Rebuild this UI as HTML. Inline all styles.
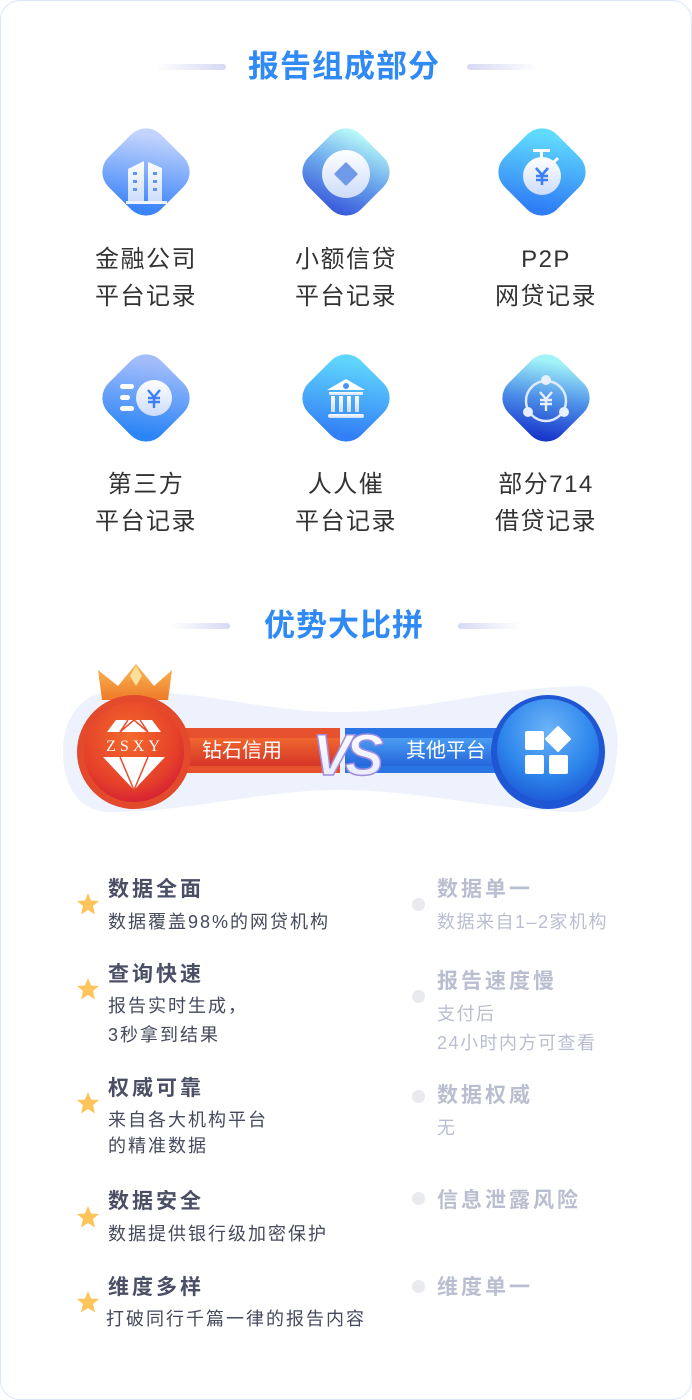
<!DOCTYPE html>
<html><head><meta charset="utf-8"><style>
*{margin:0;padding:0;box-sizing:border-box}
body{width:692px;height:1400px;background:#fff;position:relative;overflow:hidden;font-family:"Liberation Sans","Noto Sans CJK SC",sans-serif}
.card{position:absolute;left:0;top:0;width:692px;height:1400px;border:1px solid #dbe6fb;border-radius:20px}
.abs{position:absolute}
.title{position:absolute;color:#2f8af5;font-size:31px;font-weight:bold;letter-spacing:1px;line-height:40px;white-space:nowrap}
.ln{position:absolute;height:6px;border-radius:3px}
.lbl{position:absolute;width:200px;text-align:center;font-size:24px;color:#333;line-height:37px;letter-spacing:1.5px}
.ic{position:absolute;width:88px;height:88px}
.st{position:absolute;width:24px;height:24px}
.t{position:absolute;font-size:21px;font-weight:bold;color:#4a4f66;line-height:28px;white-space:nowrap;letter-spacing:3px}
.s{position:absolute;font-size:18px;color:#454a5c;line-height:28px;white-space:nowrap;letter-spacing:2px}
.rt{position:absolute;font-size:21px;color:#b9bed0;line-height:28px;white-space:nowrap;font-weight:bold;letter-spacing:3px}
.rs{position:absolute;font-size:18px;color:#b9bed0;line-height:29px;white-space:nowrap;letter-spacing:1.5px}
.dot{position:absolute;width:13px;height:13px;border-radius:50%;background:#e9eaee}
</style></head><body>
<div class="card"></div>

<div class="ln" style="left:155px;top:64px;width:71px;background:linear-gradient(90deg,rgba(220,222,245,0),#d6d9f3)"></div>
<div class="title" style="left:248px;top:47px">报告组成部分</div>
<div class="ln" style="left:467px;top:64px;width:72px;background:linear-gradient(90deg,#d6d9f3,rgba(220,222,245,0))"></div>

<svg width="0" height="0" style="position:absolute"><defs>
<rect id="dm" x="7" y="7" width="74" height="74" rx="21" transform="rotate(45 44 44)"/>
<linearGradient id="g1" x1="0.2" y1="0.1" x2="0.8" y2="0.9"><stop offset="0" stop-color="#c2d4fd"/><stop offset="1" stop-color="#3c85f8"/></linearGradient>
<linearGradient id="g2" x1="0.3" y1="0" x2="0.7" y2="1"><stop offset="0" stop-color="#b7f8f9"/><stop offset="0.5" stop-color="#6aa6ec"/><stop offset="1" stop-color="#3b5cdc"/></linearGradient>
<linearGradient id="g3" x1="0.2" y1="0.1" x2="0.8" y2="0.9"><stop offset="0" stop-color="#60dafd"/><stop offset="1" stop-color="#2f7ef5"/></linearGradient>
<linearGradient id="g4" x1="0.2" y1="0.1" x2="0.8" y2="0.9"><stop offset="0" stop-color="#a3bdfb"/><stop offset="1" stop-color="#2b85f6"/></linearGradient>
<linearGradient id="g5" x1="0.2" y1="0.1" x2="0.8" y2="0.9"><stop offset="0" stop-color="#5fd5fd"/><stop offset="1" stop-color="#3380f6"/></linearGradient>
<linearGradient id="g6" x1="0.2" y1="0.1" x2="0.8" y2="0.95"><stop offset="0" stop-color="#a2f3f8"/><stop offset="0.5" stop-color="#4c8ee8"/><stop offset="1" stop-color="#1838cc"/></linearGradient>
<linearGradient id="wg" x1="0" y1="0" x2="0" y2="1"><stop offset="0" stop-color="#fff"/><stop offset="1" stop-color="#cddcfb"/></linearGradient>
</defs></svg>

<!-- row 1 -->
<svg class="ic" style="left:102px;top:128px" viewBox="0 0 88 88"><use href="#dm" fill="url(#g1)"/>
<path d="M26,41 L42,33 L42,74 L26,74Z M46,34 L60,40 L60,74 L46,74Z" fill="url(#wg)"/><rect x="24" y="73" width="41" height="3" fill="#eef3ff"/>
<g fill="#5e95f5"><rect x="31" y="44" width="4" height="3"/><rect x="31" y="52" width="4" height="3"/><rect x="31" y="60" width="4" height="3"/><rect x="51" y="44" width="4" height="3"/><rect x="51" y="52" width="4" height="3"/><rect x="51" y="60" width="4" height="3"/></g></svg>
<svg class="ic" style="left:302px;top:128px" viewBox="0 0 88 88"><use href="#dm" fill="url(#g2)"/>
<circle cx="44" cy="46" r="24" fill="url(#wg)"/><path d="M44,36 L54,46 L44,56 L34,46Z" fill="#6f9ae9" stroke="#6f9ae9" stroke-width="3" stroke-linejoin="round"/></svg>
<svg class="ic" style="left:498px;top:128px" viewBox="0 0 88 88"><use href="#dm" fill="url(#g3)"/>
<rect x="35" y="21" width="17" height="3" fill="#fff"/><rect x="42" y="22" width="3" height="8" fill="#fff"/><path d="M56,34 L60,30" stroke="#fff" stroke-width="3"/>
<circle cx="44" cy="48" r="19" fill="url(#wg)"/><path d="M38,40 L44,47 L50,40 M44,47 L44,57 M38,48 H50 M38,52 H50" stroke="#3d7ff4" stroke-width="2.6" fill="none"/></svg>
<div class="lbl" style="left:46px;top:241px">金融公司<br>平台记录</div>
<div class="lbl" style="left:246px;top:241px">小额信贷<br>平台记录</div>
<div class="lbl" style="left:446px;top:241px">P2P<br>网贷记录</div>

<!-- row 2 -->
<svg class="ic" style="left:102px;top:354px" viewBox="0 0 88 88"><use href="#dm" fill="url(#g4)"/>
<g fill="#fff"><rect x="18" y="30" width="14" height="5" rx="2.5"/><rect x="18" y="41" width="10" height="5" rx="2.5"/><rect x="18" y="52" width="14" height="5" rx="2.5"/></g>
<circle cx="52" cy="44" r="18" fill="url(#wg)"/><path d="M46,36 L52,43 L58,36 M52,43 L52,54 M46,44 H58 M46,48 H58" stroke="#3d7ff4" stroke-width="2.4" fill="none"/></svg>
<svg class="ic" style="left:302px;top:354px" viewBox="0 0 88 88"><use href="#dm" fill="url(#g5)"/>
<path d="M25,36 L44,25 L63,36Z" fill="#fff"/><circle cx="44" cy="32" r="3" fill="#4b93f6"/>
<g fill="url(#wg)"><rect x="27" y="38" width="34" height="3"/><rect x="29" y="42" width="4" height="16"/><rect x="37" y="42" width="4" height="16"/><rect x="45" y="42" width="4" height="16"/><rect x="53" y="42" width="4" height="16"/><rect x="26" y="60" width="36" height="4" rx="2"/></g></svg>
<svg class="ic" style="left:502px;top:354px" viewBox="0 0 88 88"><use href="#dm" fill="url(#g6)"/>
<circle cx="44" cy="47" r="20" fill="none" stroke="#dfe9fc" stroke-width="2.5"/>
<circle cx="44" cy="26" r="5" fill="#e8effd"/><circle cx="26" cy="58" r="5" fill="#e8effd"/><circle cx="62" cy="58" r="5" fill="#e8effd"/>
<path d="M38,38 L44,45 L50,38 M44,45 L44,57 M38,46 H50 M38,50 H50" stroke="#e8effd" stroke-width="2.4" fill="none"/></svg>
<div class="lbl" style="left:46px;top:466px">第三方<br>平台记录</div>
<div class="lbl" style="left:246px;top:466px">人人催<br>平台记录</div>
<div class="lbl" style="left:446px;top:466px">部分714<br>借贷记录</div>

<div class="ln" style="left:170px;top:623px;width:60px;background:linear-gradient(90deg,rgba(220,222,245,0),#d6d9f3)"></div>
<div class="title" style="left:264px;top:606px">优势大比拼</div>
<div class="ln" style="left:458px;top:623px;width:62px;background:linear-gradient(90deg,#d6d9f3,rgba(220,222,245,0))"></div>

<!-- VS banner -->
<svg class="abs" style="left:0;top:655px" width="692" height="180" viewBox="0 655 692 180">
<defs>
<radialGradient id="rc" cx="0.45" cy="0.35" r="0.7"><stop offset="0" stop-color="#f36a2c"/><stop offset="0.7" stop-color="#e5402a"/><stop offset="1" stop-color="#d21c35"/></radialGradient>
<linearGradient id="rb" x1="0" y1="0" x2="0" y2="1"><stop offset="0" stop-color="#f0672f"/><stop offset="1" stop-color="#d63528"/></linearGradient>
<radialGradient id="bc" cx="0.5" cy="0.3" r="0.75"><stop offset="0" stop-color="#6cb3f8"/><stop offset="0.6" stop-color="#2d86ec"/><stop offset="1" stop-color="#1c55d4"/></radialGradient>
<linearGradient id="bb" x1="0" y1="0" x2="0" y2="1"><stop offset="0" stop-color="#4a9cf2"/><stop offset="1" stop-color="#2566dc"/></linearGradient>
<linearGradient id="cr" x1="0" y1="0" x2="0" y2="1"><stop offset="0" stop-color="#fbb955"/><stop offset="1" stop-color="#ee7b2a"/></linearGradient>
<linearGradient id="vs" x1="0" y1="0" x2="0" y2="1"><stop offset="0" stop-color="#fff"/><stop offset="1" stop-color="#e4e8ff"/></linearGradient>
</defs>
<path d="M110,692 C200,688 260,712 340,712 C420,712 490,688 580,686 C615,686 620,740 617,752 C615,790 600,812 575,812 C490,810 420,790 340,790 C260,790 190,812 110,812 C75,812 63,780 63,752 C63,720 80,693 110,692Z" fill="#edf2fd"/>
<rect x="170" y="728" width="170" height="45" fill="#e8512e"/>
<rect x="170" y="738" width="170" height="28" fill="url(#rb)"/>
<rect x="345" y="728" width="170" height="45" fill="#2a74e4"/>
<rect x="345" y="738" width="170" height="28" fill="url(#bb)"/>
<path d="M102,700 L98,670 L118,686 L136,664 L154,686 L172,670 L168,700Z" fill="url(#cr)"/>
<path d="M130,676 L136,666 L142,676 L136,686Z" fill="#fde0a0"/>
<circle cx="134" cy="752" r="57" fill="#e24a2b"/>
<circle cx="134" cy="752" r="50" fill="url(#rc)"/>
<g fill="#fff"><path d="M107,732 L116,720 L152,720 L161,732Z"/><path d="M103,757 L165,757 L134,790Z"/></g>
<g stroke="#e84b2d" stroke-width="1.5" fill="none"><path d="M134,790 L120,757 M134,790 L148,757 M120,732 L128,720 M148,732 L140,720 M120,732 L134,720 L148,732"/></g>
<text x="135" y="751" text-anchor="middle" font-family="Liberation Serif,serif" font-size="16" fill="#fff" letter-spacing="4">ZSXY</text>
<circle cx="548" cy="752" r="57" fill="#1e56d4"/>
<circle cx="548" cy="750" r="51" fill="url(#bc)"/>
<g fill="#fff"><rect x="525" y="731" width="19" height="19" rx="2"/><rect x="525" y="755" width="19" height="19" rx="2"/><rect x="549" y="755" width="19" height="19" rx="2"/><path d="M558,727 L570,739 L558,751 L546,739Z" stroke="#fff" stroke-width="2" stroke-linejoin="round"/></g>
<text x="242" y="757" text-anchor="middle" font-family="Liberation Sans,Noto Sans CJK SC,sans-serif" font-size="20" fill="#fff">钻石信用</text>
<text x="446" y="757" text-anchor="middle" font-family="Liberation Sans,Noto Sans CJK SC,sans-serif" font-size="20" fill="#fff">其他平台</text>
<text x="345" y="775" text-anchor="middle" font-family="Liberation Sans,sans-serif" font-size="58" font-weight="bold" font-style="italic" fill="url(#vs)" stroke="#a08de0" stroke-width="1.5" letter-spacing="-6">VS</text>
</svg>

<!-- list -->
<svg class="st" style="left:76px;top:892px" viewBox="0 0 24 24"><path d="M12,1 L15,8.5 L23,9 L17,14 L19,22.5 L12,18 L5,22.5 L7,14 L1,9 L9,8.5Z" fill="#fcc45a"/></svg>
<div class="t" style="left:108px;top:876px">数据全面</div>
<div class="s" style="left:108px;top:908px">数据覆盖98%的网贷机构</div>
<svg class="st" style="left:76px;top:977px" viewBox="0 0 24 24"><path d="M12,1 L15,8.5 L23,9 L17,14 L19,22.5 L12,18 L5,22.5 L7,14 L1,9 L9,8.5Z" fill="#fcc45a"/></svg>
<div class="t" style="left:108px;top:961px">查询快速</div>
<div class="s" style="left:108px;top:992px">报告实时生成，</div>
<div class="s" style="left:108px;top:1021px">3秒拿到结果</div>
<svg class="st" style="left:76px;top:1091px" viewBox="0 0 24 24"><path d="M12,1 L15,8.5 L23,9 L17,14 L19,22.5 L12,18 L5,22.5 L7,14 L1,9 L9,8.5Z" fill="#fcc45a"/></svg>
<div class="t" style="left:108px;top:1075px">权威可靠</div>
<div class="s" style="left:108px;top:1106px">来自各大机构平台</div>
<div class="s" style="left:108px;top:1132px">的精准数据</div>
<svg class="st" style="left:76px;top:1205px" viewBox="0 0 24 24"><path d="M12,1 L15,8.5 L23,9 L17,14 L19,22.5 L12,18 L5,22.5 L7,14 L1,9 L9,8.5Z" fill="#fcc45a"/></svg>
<div class="t" style="left:108px;top:1188px">数据安全</div>
<div class="s" style="left:108px;top:1220px">数据提供银行级加密保护</div>
<svg class="st" style="left:76px;top:1290px" viewBox="0 0 24 24"><path d="M12,1 L15,8.5 L23,9 L17,14 L19,22.5 L12,18 L5,22.5 L7,14 L1,9 L9,8.5Z" fill="#fcc45a"/></svg>
<div class="t" style="left:108px;top:1274px">维度多样</div>
<div class="s" style="left:106px;top:1305px">打破同行千篇一律的报告内容</div>

<div class="dot" style="left:412px;top:898px"></div>
<div class="rt" style="left:437px;top:876px">数据单一</div>
<div class="rs" style="left:437px;top:908px">数据来自1–2家机构</div>
<div class="dot" style="left:412px;top:990px"></div>
<div class="rt" style="left:437px;top:968px">报告速度慢</div>
<div class="rs" style="left:437px;top:1000px">支付后</div>
<div class="rs" style="left:437px;top:1029px">24小时内方可查看</div>
<div class="dot" style="left:412px;top:1090px"></div>
<div class="rt" style="left:437px;top:1082px">数据权威</div>
<div class="rs" style="left:437px;top:1114px">无</div>
<div class="dot" style="left:412px;top:1192px"></div>
<div class="rt" style="left:437px;top:1187px">信息泄露风险</div>
<div class="dot" style="left:412px;top:1280px"></div>
<div class="rt" style="left:437px;top:1274px">维度单一</div>
</body></html>
